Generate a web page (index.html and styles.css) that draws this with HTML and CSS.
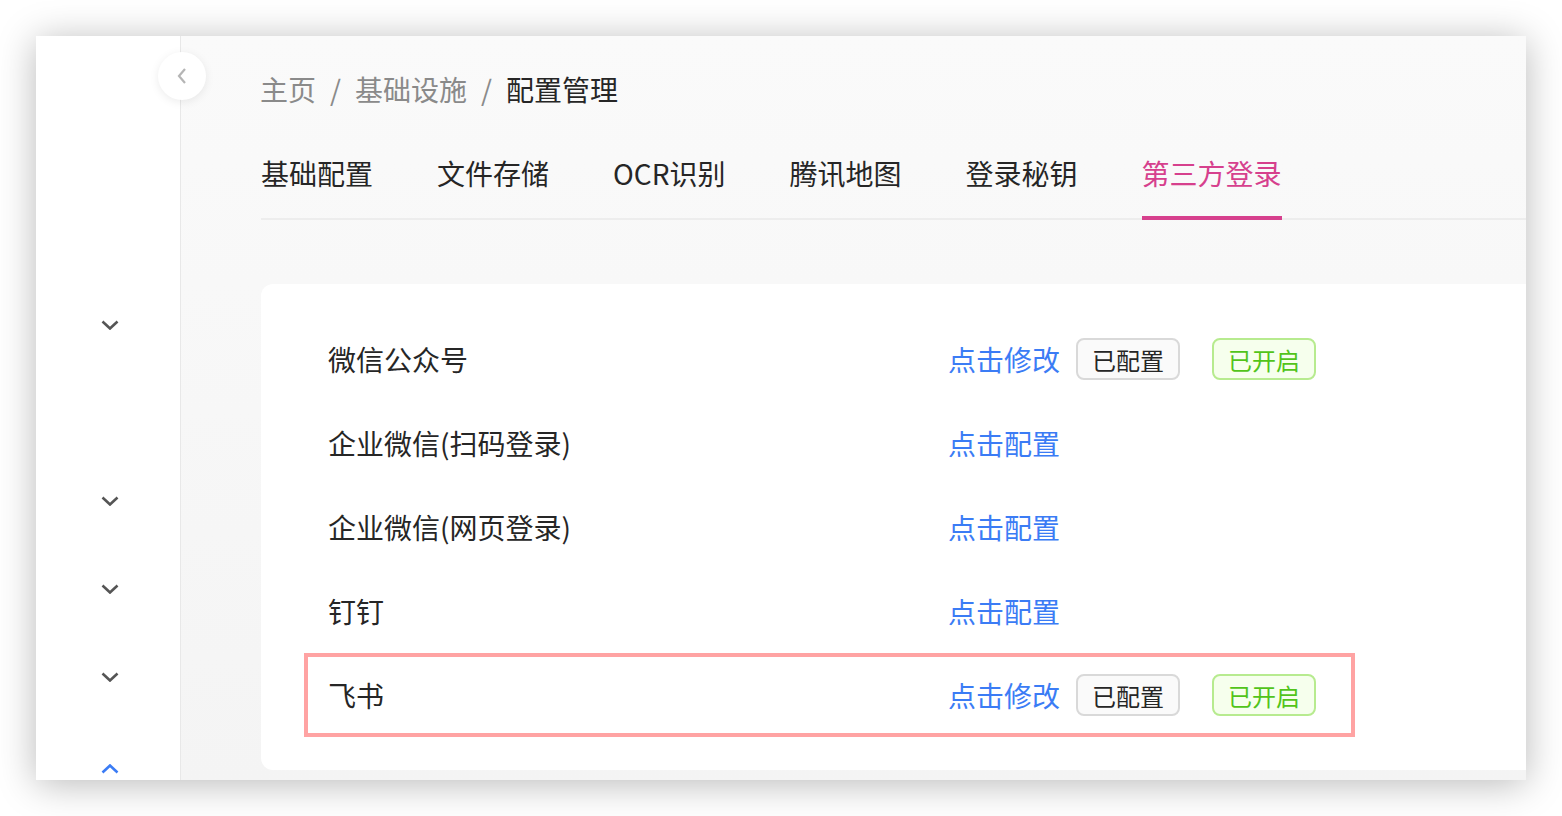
FILE: index.html
```html
<!DOCTYPE html>
<html lang="zh-CN">
  <head>
    <meta charset="UTF-8" />
    <meta name="viewport" content="width=device-width, initial-scale=1.0" />
    <title>配置管理</title>
    <link rel="stylesheet" href="styles.css">
  </head>
  <body>
    <div class="window">
      <aside class="sidebar">
        <ul class="menu">
          <li class="menu-item">
            <svg class="arrow" viewBox="0 0 18 10"><path d="M1.5 1.5 9 8.5 16.5 1.5" /></svg>
          </li>
          <li class="menu-item"></li>
          <li class="menu-item">
            <svg class="arrow" viewBox="0 0 18 10"><path d="M1.5 1.5 9 8.5 16.5 1.5" /></svg>
          </li>
          <li class="menu-item">
            <svg class="arrow" viewBox="0 0 18 10"><path d="M1.5 1.5 9 8.5 16.5 1.5" /></svg>
          </li>
          <li class="menu-item">
            <svg class="arrow" viewBox="0 0 18 10"><path d="M1.5 1.5 9 8.5 16.5 1.5" /></svg>
          </li>
          <li class="menu-item open">
            <svg class="arrow" viewBox="0 0 18 10"><path d="M1.5 8.5 9 1.5 16.5 8.5" /></svg>
          </li>
        </ul>
      </aside>

      <!-- Sidebar einklappen -->
      <button class="collapse-btn" type="button">
        <svg viewBox="0 0 12 18"><path d="M9 2 3 9 9 16" /></svg>
      </button>

      <main class="main">
        <nav class="breadcrumb">
          <span class="crumb">主页</span>
          <span class="sep">/</span>
          <span class="crumb">基础设施</span>
          <span class="sep">/</span>
          <span class="crumb current">配置管理</span>
        </nav>

        <div class="tabs">
          <a class="tab">基础配置</a>
          <a class="tab">文件存储</a>
          <a class="tab">OCR识别</a>
          <a class="tab">腾讯地图</a>
          <a class="tab">登录秘钥</a>
          <a class="tab active">第三方登录</a>
        </div>

        <section class="card">
          <div class="row">
            <span class="row-name">微信公众号</span>
            <a class="link">点击修改</a>
            <span class="tag">已配置</span>
            <span class="tag tag-green">已开启</span>
          </div>
          <div class="row">
            <span class="row-name">企业微信(扫码登录)</span>
            <a class="link">点击配置</a>
          </div>
          <div class="row">
            <span class="row-name">企业微信(网页登录)</span>
            <a class="link">点击配置</a>
          </div>
          <div class="row">
            <span class="row-name">钉钉</span>
            <a class="link">点击配置</a>
          </div>
          <div class="row highlight">
            <span class="row-name">飞书</span>
            <a class="link">点击修改</a>
            <span class="tag">已配置</span>
            <span class="tag tag-green">已开启</span>
          </div>
        </section>
      </main>
    </div>
  </body>
</html>
```

FILE: styles.css
```css
* {
  box-sizing: border-box;
}
body {
  margin: 0;
  padding: 36px;
  background: #ffffff;
  font-family: "Noto Sans CJK SC", "Noto Sans", sans-serif;
  color: #262626;
}
.window {
  position: relative;
  display: flex;
  width: 1490px;
  height: 744px;
  overflow: hidden;
  background: #ffffff;
  box-shadow: 0 4px 36px rgba(0, 0, 0, 0.28);
}
.sidebar {
  width: 145px;
  flex-shrink: 0;
  background: #ffffff;
  border-right: 1px solid #e8e8e8;
}
.menu {
  list-style: none;
  margin: 0;
  padding: 245px 0 0 0;
}
.menu-item {
  height: 88px;
  display: flex;
  align-items: center;
  justify-content: center;
  padding-left: 4px;
}
.menu-item.open {
  padding-top: 8px;
}
.arrow {
  width: 18px;
  height: 10px;
  fill: none;
  stroke: #555555;
  stroke-width: 2.6;
}
.menu-item.open .arrow {
  stroke: #3b7cf5;
}
.collapse-btn {
  position: absolute;
  left: 122px;
  top: 16px;
  width: 48px;
  height: 48px;
  border: none;
  border-radius: 50%;
  background: #ffffff;
  box-shadow: 0 2px 10px rgba(0, 0, 0, 0.08);
  display: flex;
  align-items: center;
  justify-content: center;
  padding: 0;
}
.collapse-btn svg {
  width: 12px;
  height: 18px;
  fill: none;
  stroke: #b5b5b5;
  stroke-width: 2.2;
}
.main {
  flex: 1;
  padding: 33px 0 0 79px;
  background: linear-gradient(#fafafa, #f4f4f4);
}
.breadcrumb {
  display: flex;
  font-size: 28px;
  line-height: 40px;
  color: #8a8a8a;
}
.sep {
  padding: 0 14px;
  color: #8a8a8a;
}
.crumb.current {
  color: #262626;
}
.tabs {
  display: flex;
  margin-top: 44px;
  margin-left: 1px;
  border-bottom: 2px solid #ededed;
}
.tab {
  position: relative;
  font-size: 28px;
  line-height: 40px;
  padding-bottom: 25px;
  margin-right: 64px;
  color: #262626;
  cursor: pointer;
}
.tab.active {
  color: #d6408d;
}
.tab.active::after {
  content: "";
  position: absolute;
  left: 1px;
  right: 0;
  bottom: -2px;
  height: 4px;
  background: #d6408d;
}
.card {
  margin-top: 64px;
  margin-left: 1px;
  background: #ffffff;
  border-radius: 12px 0 0 12px;
  padding: 33px 0 33px 43px;
}
.row {
  display: flex;
  align-items: center;
  width: 1051px;
  height: 84px;
  padding-left: 20px;
  border: 4px solid transparent;
  font-size: 28px;
}
.row.highlight {
  border-color: #ffa3a3;
}
.row-name {
  width: 620px;
  flex-shrink: 0;
}
.link {
  color: #3b7cf5;
  cursor: pointer;
}
.tag {
  width: 104px;
  height: 42px;
  margin-left: 16px;
  border: 2px solid #d9d9d9;
  border-radius: 8px;
  background: #fafafa;
  font-size: 24px;
  display: flex;
  align-items: center;
  justify-content: center;
  color: #262626;
}
.tag-green {
  margin-left: 32px;
  border-color: #b7eb8f;
  background: #f6ffed;
  color: #52c41a;
}
```
